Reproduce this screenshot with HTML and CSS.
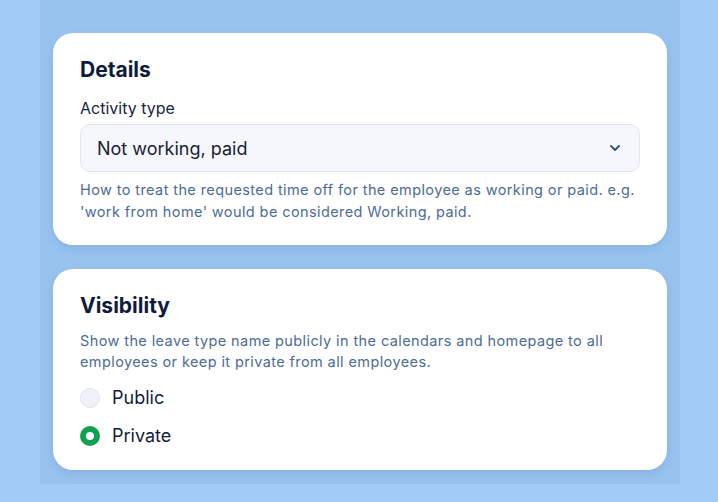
FILE: index.html
```html
<!DOCTYPE html>
<html lang="en">
  <head>
    <meta charset="UTF-8" />
    <meta name="viewport" content="width=device-width, initial-scale=1.0" />
    <title>Leave type settings</title>
    <link rel="stylesheet" href="styles.css">
  </head>
  <body>
    <div class="panel">
      <!-- Details card -->
      <div class="card">
        <h2>Details</h2>
        <label class="field-label" for="activityType">Activity type</label>
        <div class="select-box">
          <span id="activityType">Not working, paid</span>
          <svg class="chevron" width="12" height="8" viewBox="0 0 12 8">
            <path d="M2 2 L6 6 L10 2" fill="none" stroke="#3a557c" stroke-width="2" stroke-linecap="round" stroke-linejoin="round" />
          </svg>
        </div>
        <p class="hint">How to treat the requested time off for the employee as working or paid. e.g. 'work from home' would be considered Working, paid.</p>
      </div>

      <!-- Visibility card -->
      <div class="card">
        <h2>Visibility</h2>
        <p class="hint desc">Show the leave type name publicly in the calendars and homepage to all employees or keep it private from all employees.</p>
        <div class="radio-list">
          <div class="radio-row">
            <span class="radio"></span>
            <span>Public</span>
          </div>
          <div class="radio-row">
            <span class="radio checked"></span>
            <span>Private</span>
          </div>
        </div>
      </div>
    </div>
  </body>
</html>
```

FILE: styles.css
```css
body {
  margin: 0;
  font-family: "Inter", "Noto Sans", sans-serif;
  background: #a2cbf5;
  width: 718px;
  height: 502px;
  overflow: hidden;
}
.panel {
  margin-left: 40px;
  width: 640px;
  height: 484px;
  background: #99c3ef;
  padding: 33px 13px 0;
  box-sizing: border-box;
  display: flex;
  flex-direction: column;
  gap: 24px;
}
.card {
  background: #fff;
  border-radius: 20px;
  padding: 23px 27px 22px;
  box-shadow: 0 4px 10px rgba(40, 80, 140, 0.15);
}
h2 {
  margin: 0;
  font-size: 21px;
  line-height: 28px;
  font-weight: 700;
  color: #101a3a;
}
.field-label {
  display: block;
  margin-top: 12px;
  font-size: 16px;
  line-height: 24px;
  color: #1b2440;
}
.select-box {
  margin-top: 4px;
  height: 48px;
  box-sizing: border-box;
  border: 1.5px solid #dfe6f3;
  border-radius: 10px;
  background: #f5f7fc;
  display: flex;
  align-items: center;
  justify-content: space-between;
  padding: 0 18px 0 16px;
  font-size: 18px;
  color: #1b2235;
}
.hint {
  margin: 7px 0 0;
  font-size: 14.5px;
  line-height: 22px;
  letter-spacing: 0.4px;
  color: #4d6c95;
}
.desc {
  margin-top: 10px;
  line-height: 21px;
}
.radio-list {
  margin-top: 14px;
  display: flex;
  flex-direction: column;
  gap: 14px;
}
.radio-row {
  display: flex;
  align-items: center;
  gap: 12px;
  font-size: 18px;
  line-height: 24px;
  color: #141c3a;
}
.radio {
  width: 20px;
  height: 20px;
  border-radius: 50%;
  box-sizing: border-box;
  border: 1.5px solid #dde3f0;
  background: #eff2f9;
}
.radio.checked {
  border: 6px solid #12a150;
  background: #fff;
}
```
